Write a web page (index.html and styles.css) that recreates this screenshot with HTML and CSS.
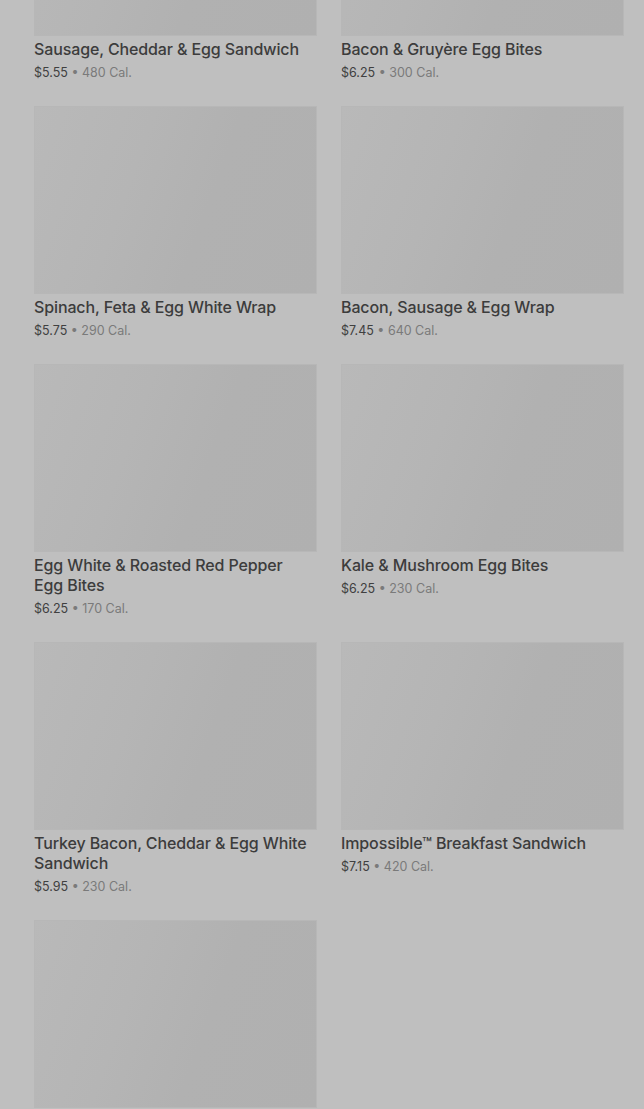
FILE: index.html
```html
<!DOCTYPE html>
<html lang="en">
<head>
    <meta charset="UTF-8">
    <meta name="viewport" content="width=device-width, initial-scale=1.0">
    <title>Hot Breakfast</title>
    <link rel="stylesheet" href="styles.css">
</head>
<body>

<div class="menu-grid">
    <div class="menu-item">
        <div class="item-image"></div>
        <h3>Sausage, Cheddar &amp; Egg Sandwich</h3>
        <p class="item-info">$5.55 <span class="cal">• 480 Cal.</span></p>
    </div>
    <div class="menu-item">
        <div class="item-image"></div>
        <h3>Bacon &amp; Gruyère Egg Bites</h3>
        <p class="item-info">$6.25 <span class="cal">• 300 Cal.</span></p>
    </div>

    <div class="menu-item">
        <div class="item-image"></div>
        <h3>Spinach, Feta &amp; Egg White Wrap</h3>
        <p class="item-info">$5.75 <span class="cal">• 290 Cal.</span></p>
    </div>
    <div class="menu-item">
        <div class="item-image"></div>
        <h3>Bacon, Sausage &amp; Egg Wrap</h3>
        <p class="item-info">$7.45 <span class="cal">• 640 Cal.</span></p>
    </div>

    <div class="menu-item">
        <div class="item-image"></div>
        <h3>Egg White &amp; Roasted Red Pepper Egg Bites</h3>
        <p class="item-info">$6.25 <span class="cal">• 170 Cal.</span></p>
    </div>
    <div class="menu-item">
        <div class="item-image"></div>
        <h3>Kale &amp; Mushroom Egg Bites</h3>
        <p class="item-info">$6.25 <span class="cal">• 230 Cal.</span></p>
    </div>

    <div class="menu-item">
        <div class="item-image"></div>
        <h3>Turkey Bacon, Cheddar &amp; Egg White Sandwich</h3>
        <p class="item-info">$5.95 <span class="cal">• 230 Cal.</span></p>
    </div>
    <div class="menu-item">
        <div class="item-image"></div>
        <h3>Impossible™ Breakfast Sandwich</h3>
        <p class="item-info">$7.15 <span class="cal">• 420 Cal.</span></p>
    </div>

    <!-- next card, only its picture is in view -->
    <div class="menu-item">
        <div class="item-image"></div>
    </div>
</div>

</body>
</html>
```

FILE: styles.css
```css
body {
    font-family: Inter, "Liberation Sans", sans-serif;
    background-color: #bfbfbf;
    margin: 0;
    overflow: hidden;
    height: 1109px;
}

.menu-grid {
    display: grid;
    grid-template-columns: 283px 283px;
    column-gap: 24px;
    row-gap: 23px;
    padding: 0 20px 0 34px;
    margin-top: -152px;
}

.menu-item h3 {
    margin: 3px 0 0;
    padding-right: 8px;
    font-size: 16px;
    line-height: 20px;
    font-weight: 500;
    letter-spacing: -0.12px;
    color: #3c3c3c;
}

.item-image {
    height: 188px;
    background: linear-gradient(110deg, #b9b9b9 0%, #b5b5b5 35%, #b1b1b1 60%, #b0b0b0 100%);
    box-shadow: inset 0 0 0 1px #b7b7b7;
}

.item-info {
    margin: 4px 0 0;
    font-size: 12.5px;
    line-height: 20px;
    color: #404040;
}

.item-info .cal {
    color: #7a7a7a;
}
```
